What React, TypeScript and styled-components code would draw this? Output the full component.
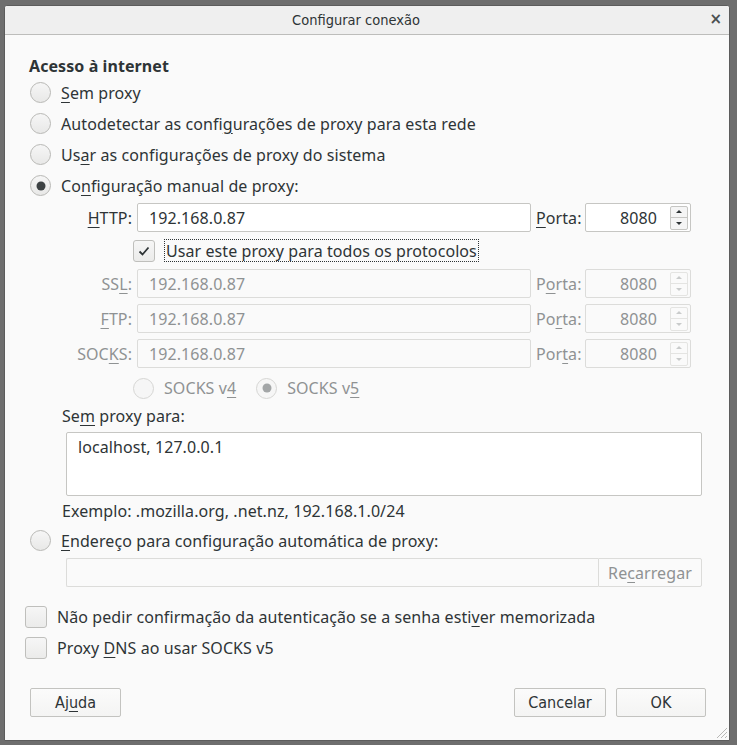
import React from "react"
import styled, { createGlobalStyle } from "styled-components"

const GlobalStyle = createGlobalStyle`
	html, body {
		margin: 0;
		padding: 0;
		background: #6e6e6e;
	}
	body {
		font-family: "Noto Sans", "Open Sans", sans-serif;
	}
`

const fg = '#2e3436'
const fgDisabled = '#8f9293'

const Screen = styled.div`
	width: 737px;
	height: 745px;
	box-sizing: border-box;
	padding: 5px 7px 4px 4px;
	background: #6e6e6e;
`

const Dialog = styled.div`
	position: relative;
	width: 726px;
	height: 736px;
	box-sizing: border-box;
	display: flex;
	flex-direction: column;
	background: #fafafa;
	border: 1px solid #5c5c5c;
	border-radius: 3px 3px 0 0;
	color: ${fg};
	font-size: 16px;
	letter-spacing: 0.08px;
	overflow: hidden;
`

const Header = styled.div`
	position: relative;
	height: 28px;
	flex-shrink: 0;
	display: flex;
	align-items: center;
	justify-content: center;
	padding-right: 22px;
	background: #efefef;
	border-bottom: 1px solid #bdbdbb;
	letter-spacing: 0;
`

const Title = styled.div`
	font-family: "DejaVu Sans Condensed", "DejaVu Sans", sans-serif;
	font-size: 14.5px;
	color: ${fg};
`

const Close = styled.div`
	position: absolute;
	right: 7px;
	top: 4px;
	font-family: "DejaVu Sans", sans-serif;
	font-size: 15px;
	font-weight: bold;
	color: #4a4f51;
`

const Body = styled.div`
	display: flex;
	flex-direction: column;
	padding: 21px 0 0 24px;
`

const Heading = styled.div`
	font-weight: bold;
	line-height: 20px;
	height: 20px;
	margin-bottom: 1px;
`

const U = styled.span`
	text-decoration: underline;
	text-underline-offset: 3px;
	text-decoration-thickness: 1px;
`

const RadioRow = styled.div<{ $top?: number }>`
	height: 31px;
	margin-top: ${p => p.$top ?? 0}px;
	display: flex;
	align-items: center;
	gap: 10px;
	margin-left: 1px;
	white-space: nowrap;
`

const RadioCircle = styled.span<{ $checked?: boolean; $disabled?: boolean }>`
	position: relative;
	width: 21px;
	height: 21px;
	box-sizing: border-box;
	border-radius: 50%;
	flex-shrink: 0;
	border: 1px solid ${p => (p.$disabled ? '#d6d6d4' : '#b8b8b5')};
	background: ${p => (p.$disabled ? '#f6f6f6' : 'linear-gradient(#f6f6f6, #e8e8e7)')};
	&::after {
		content: '';
		display: ${p => (p.$checked ? 'block' : 'none')};
		position: absolute;
		left: 50%;
		top: 50%;
		width: 9px;
		height: 9px;
		border-radius: 50%;
		transform: translate(-50%, -50%);
		background: ${p => (p.$disabled ? '#a3a6a7' : '#3d4244')};
	}
`

const Label = styled.span<{ $disabled?: boolean }>`
	color: ${p => (p.$disabled ? fgDisabled : fg)};
	line-height: 20px;
	white-space: nowrap;
`

const ProxyGrid = styled.div`
	margin: 2px 0 0 33px;
	display: grid;
	grid-template-columns: 70px 394px 44px 106px;
	grid-template-rows: 29px 25px 29px 29px 29px 28px;
	column-gap: 5px;
	row-gap: 6px;
	align-items: center;
`

const FieldLabel = styled(Label)`
	justify-self: end;
`

const PortLabel = styled(Label)`
	justify-self: start;
`

const TextField = styled.div<{ $disabled?: boolean }>`
	height: 29px;
	box-sizing: border-box;
	display: flex;
	align-items: center;
	padding: 0 11px;
	border: 1px solid ${p => (p.$disabled ? '#dcdcda' : '#c6c6c3')};
	border-radius: 2px;
	background: ${p => (p.$disabled ? '#fafafa' : '#ffffff')};
	color: ${p => (p.$disabled ? fgDisabled : fg)};
	white-space: nowrap;
`

const PortField = styled(TextField)`
	justify-content: flex-end;
	padding: 0 2px 0 8px;
	gap: 13px;
`

const Spinner = styled.div<{ $disabled?: boolean }>`
	width: 18px;
	height: 24px;
	box-sizing: border-box;
	display: flex;
	flex-direction: column;
	border: 1px solid ${p => (p.$disabled ? '#e4e4e2' : '#c6c6c3')};
	border-radius: 2px;
	background: ${p => (p.$disabled ? '#fafafa' : '#f5f5f5')};
`

const SpinHalf = styled.div<{ $down?: boolean; $disabled?: boolean }>`
	flex: 1;
	display: flex;
	align-items: center;
	justify-content: center;
	border-top: ${p => (p.$down ? `1px solid ${p.$disabled ? '#e4e4e2' : '#c6c6c3'}` : 'none')};
	&::before {
		content: '';
		width: 0;
		height: 0;
		border-left: 3px solid transparent;
		border-right: 3px solid transparent;
		${p => (p.$down ? 'border-top' : 'border-bottom')}: 3px solid ${p => (p.$disabled ? '#c9cbcb' : '#2e3436')};
	}
`

const SubRow = styled.div<{ $gap: number }>`
	grid-column: 2 / span 3;
	margin-left: -4px;
	display: flex;
	align-items: center;
	gap: ${p => p.$gap}px;
`

const CheckBox = styled.span`
	width: 22px;
	height: 22px;
	box-sizing: border-box;
	flex-shrink: 0;
	display: flex;
	align-items: center;
	justify-content: center;
	border: 1px solid #bfbfbc;
	border-radius: 3px;
	background: linear-gradient(#f6f6f6, #ebebea);
`

const FocusLabel = styled(Label)`
	padding: 1px 1px 0 1px;
	border: 1px dotted #2e3436;
`

const SocksGroup = styled.div`
	display: flex;
	align-items: center;
	gap: 10px;
`

const PlainLine = styled.div<{ $top: number }>`
	margin: ${p => p.$top}px 0 0 33px;
	line-height: 20px;
	height: 20px;
	white-space: nowrap;
`

const TextArea = styled.div`
	margin: 6px 0 0 37px;
	width: 636px;
	height: 64px;
	box-sizing: border-box;
	padding: 4px 11px;
	border: 1px solid #c6c6c3;
	border-radius: 2px;
	background: #ffffff;
	line-height: 20px;
`

const UrlRow = styled.div`
	margin: 2px 0 0 37px;
	display: flex;
	height: 29px;
`

const UrlField = styled.div`
	width: 532px;
	box-sizing: border-box;
	border: 1px solid #dcdcda;
	border-right: none;
	border-radius: 2px 0 0 2px;
	background: #fafafa;
`

const ReloadButton = styled.div`
	width: 104px;
	box-sizing: border-box;
	display: flex;
	align-items: center;
	justify-content: center;
	border: 1px solid #dcdcda;
	border-radius: 0 2px 2px 0;
	background: #fafafa;
	color: ${fgDisabled};
`

const CheckRow = styled.div<{ $top?: number }>`
	height: 31px;
	margin: ${p => p.$top ?? 0}px 0 0 -4px;
	display: flex;
	align-items: center;
	gap: 10px;
	white-space: nowrap;
`

const ButtonBar = styled.div`
	margin: 25px 0 0 1px;
	width: 676px;
	display: flex;
	justify-content: space-between;
`

const ButtonGroup = styled.div`
	display: flex;
	gap: 10px;
`

const Button = styled.div<{ $width: number }>`
	width: ${p => p.$width}px;
	height: 29px;
	box-sizing: border-box;
	display: flex;
	align-items: center;
	justify-content: center;
	border: 1px solid #c3c3c0;
	border-radius: 2px;
	background: linear-gradient(#fbfbfb, #f4f4f3);
	font-family: "DejaVu Sans Condensed", "DejaVu Sans", sans-serif;
	font-size: 16px;
	letter-spacing: 0;
	color: ${fg};
`

const Grip = styled.svg`
	position: absolute;
	right: 1px;
	bottom: 1px;
`

const Check = () => (
	<svg width="14" height="14" viewBox="0 0 14 14">
		<path d="M2.5 7.5 L5.5 10.5 L11.5 3.5" fill="none" stroke="#2e3436" strokeWidth="1.8" />
	</svg>
)

const Port = ({ disabled }: { disabled?: boolean }) => (
	<PortField $disabled={disabled}>
		<span>8080</span>
		<Spinner $disabled={disabled}>
			<SpinHalf $disabled={disabled} />
			<SpinHalf $down $disabled={disabled} />
		</Spinner>
	</PortField>
)

type ProxyLine = { label: React.ReactNode; port: React.ReactNode }

const disabledLines: ProxyLine[] = [
	{ label: <>SS<U>L</U>:</>, port: <>P<U>o</U>rta:</> },
	{ label: <><U>F</U>TP:</>, port: <>Po<U>r</U>ta:</> },
	{ label: <>SOC<U>K</U>S:</>, port: <>Por<U>t</U>a:</> },
]

export default function App() {
	return (
		<Screen>
			<GlobalStyle />
			<Dialog>
				<Header>
					<Title>Configurar conexão</Title>
					<Close>×</Close>
				</Header>
				<Body>
					<Heading>Acesso à internet</Heading>
					<RadioRow>
						<RadioCircle />
						<Label><U>S</U>em proxy</Label>
					</RadioRow>
					<RadioRow>
						<RadioCircle />
						<Label>Autodetectar as confi<U>g</U>urações de proxy para esta rede</Label>
					</RadioRow>
					<RadioRow>
						<RadioCircle />
						<Label>Us<U>a</U>r as configurações de proxy do sistema</Label>
					</RadioRow>
					<RadioRow>
						<RadioCircle $checked />
						<Label>Co<U>n</U>figuração manual de proxy:</Label>
					</RadioRow>

					<ProxyGrid>
						<FieldLabel><U>H</U>TTP:</FieldLabel>
						<TextField>192.168.0.87</TextField>
						<PortLabel><U>P</U>orta:</PortLabel>
						<Port />

						<SubRow $gap={9}>
							<CheckBox><Check /></CheckBox>
							<FocusLabel>Usar este proxy para todos os protocolos</FocusLabel>
						</SubRow>

						{disabledLines.map((line, i) => (
							<React.Fragment key={i}>
								<FieldLabel $disabled>{line.label}</FieldLabel>
								<TextField $disabled>192.168.0.87</TextField>
								<PortLabel $disabled>{line.port}</PortLabel>
								<Port disabled />
							</React.Fragment>
						))}

						<SubRow $gap={20}>
							<SocksGroup>
								<RadioCircle $disabled />
								<Label $disabled>SOCKS v<U>4</U></Label>
							</SocksGroup>
							<SocksGroup>
								<RadioCircle $disabled $checked />
								<Label $disabled>SOCKS v<U>5</U></Label>
							</SocksGroup>
						</SubRow>
					</ProxyGrid>

					<PlainLine $top={4}>Se<U>m</U> proxy para:</PlainLine>
					<TextArea>localhost, 127.0.0.1</TextArea>
					<PlainLine $top={5}>Exemplo: .mozilla.org, .net.nz, 192.168.1.0/24</PlainLine>

					<RadioRow $top={4}>
						<RadioCircle />
						<Label><U>E</U>ndereço para configuração automática de proxy:</Label>
					</RadioRow>
					<UrlRow>
						<UrlField />
						<ReloadButton>Re<U>c</U>arregar</ReloadButton>
					</UrlRow>

					<CheckRow $top={14}>
						<CheckBox />
						<Label>Não pedir confirmação da autenticação se a senha esti<U>v</U>er memorizada</Label>
					</CheckRow>
					<CheckRow>
						<CheckBox />
						<Label>Proxy <U>D</U>NS ao usar SOCKS v5</Label>
					</CheckRow>

					<ButtonBar>
						<Button $width={91}>Aj<U>u</U>da</Button>
						<ButtonGroup>
							<Button $width={92}>Cancelar</Button>
							<Button $width={90}>OK</Button>
						</ButtonGroup>
					</ButtonBar>
				</Body>
				<Grip width="14" height="14" viewBox="0 0 14 14">
					<path d="M13 3 L3 13 M13 7 L7 13 M13 11 L11 13" stroke="#b8b8b6" strokeWidth="1" />
				</Grip>
			</Dialog>
		</Screen>
	)
}
